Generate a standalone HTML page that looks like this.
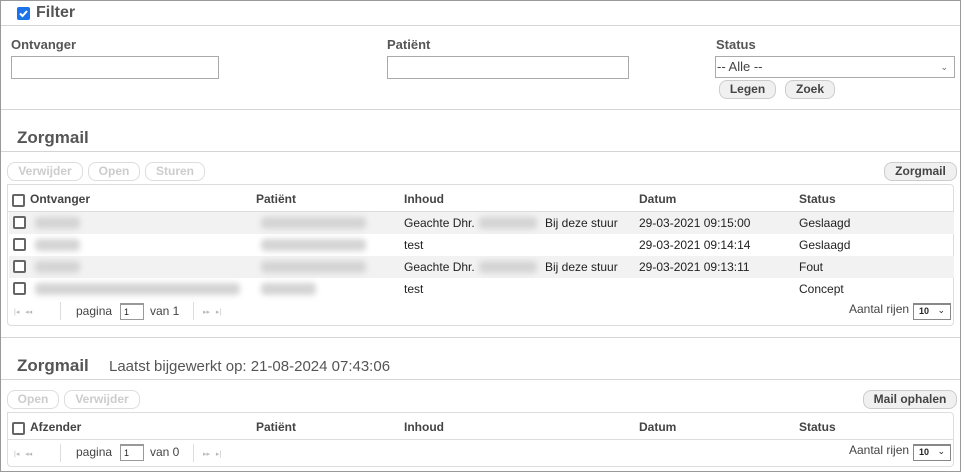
<!DOCTYPE html>
<html><head><meta charset="utf-8"><style>
*{box-sizing:border-box;margin:0;padding:0}
body{width:961px;height:472px;overflow:hidden;background:#fff;font-family:"Liberation Sans",Arial,sans-serif;font-size:12px;color:#222;position:relative}
.a{position:absolute}
.frame{left:0;top:0;width:961px;height:472px;border:1px solid #999}
.hl{position:absolute;left:1px;width:959px;height:1px;background:#d4d4d4}
.lbl{font-weight:bold;font-size:13px;color:#555}
.inp{border:1px solid #aaa;background:#fff;height:23px}
.btn{position:absolute;height:19px;border:1px solid #ccc;border-radius:8px;background:#f0f0f0;font-weight:bold;font-size:12px;color:#444;text-align:center;line-height:17px}
.dis{background:#fff;color:#ccc;border-color:#ddd}
.h2{font-weight:bold;font-size:17px;color:#555}
.box{position:absolute;left:7px;width:947px;border:1px solid #ddd;border-radius:0 4px 4px 4px}
.th{position:absolute;font-weight:bold;color:#444;font-size:12px}
.cb{position:absolute;width:13px;height:13px;border:2px solid #666;border-radius:2px;background:#fff}
.row{position:absolute;left:1px;width:945px;height:22px}
.t{position:absolute;font-size:12px;color:#222}
.bl{position:absolute;height:12px;background:#d4d4d4;filter:blur(3px);border-radius:4px}
.pg{position:absolute;font-size:12px;color:#444}
.pi{position:absolute;width:24px;height:17px;border:1px solid #999;border-top-width:2px;font-size:9px;padding-left:3px;line-height:14px}
.sep{position:absolute;width:1px;height:18px;background:#ddd}
.ic{position:absolute;font-size:7px;color:#bbb}
.sel{position:absolute;width:38px;height:17px;border:1px solid #888;border-top-width:2px;font-size:9px;font-weight:bold;padding-left:5px;line-height:13px;background:#fff}
</style></head><body>
<div class="a frame"></div>
<div class="a" style="left:17px;top:7px;width:13px;height:13px;background:#1a73e8;border-radius:2px"><svg width="13" height="13" viewBox="0 0 13 13"><path d="M3 6.5l2.5 2.5 4.5-5" stroke="#fff" stroke-width="2" fill="none"/></svg></div>
<div class="a" style="left:36px;top:4px;font-weight:bold;font-size:16px;color:#555">Filter</div>
<div class="hl" style="top:25px"></div>
<div class="a lbl" style="left:11px;top:37px">Ontvanger</div>
<div class="a inp" style="left:11px;top:56px;width:208px"></div>
<div class="a lbl" style="left:387px;top:37px">Patiënt</div>
<div class="a inp" style="left:387px;top:56px;width:242px"></div>
<div class="a lbl" style="left:716px;top:37px">Status</div>
<div class="a inp" style="left:715px;top:56px;width:240px;height:22px;font-size:13px;color:#444;padding-left:1px;line-height:20px">-- Alle --<span style="position:absolute;right:6px;top:0;font-size:9px;color:#666">&#8964;</span></div>
<div class="btn" style="left:719px;top:80px;width:57px">Legen</div>
<div class="btn" style="left:785px;top:80px;width:50px">Zoek</div>
<div class="hl" style="top:109px"></div>
<div class="a h2" style="left:17px;top:128px">Zorgmail</div>
<div class="hl" style="top:151px"></div>
<div class="btn dis" style="left:7px;top:162px;width:76px">Verwijder</div>
<div class="btn dis" style="left:88px;top:162px;width:52px">Open</div>
<div class="btn dis" style="left:145px;top:162px;width:60px">Sturen</div>
<div class="btn" style="left:884px;top:162px;width:73px">Zorgmail</div>

<div class="box" style="top:184px;height:142px">
 <div class="cb" style="left:4px;top:9px"></div>
 <div class="th" style="left:22px;top:7px">Ontvanger</div>
 <div class="th" style="left:248px;top:7px">Patiënt</div>
 <div class="th" style="left:396px;top:7px">Inhoud</div>
 <div class="th" style="left:631px;top:7px">Datum</div>
 <div class="th" style="left:791px;top:7px">Status</div>
 <div class="a" style="left:0;top:26px;width:945px;height:1px;background:#ddd"></div>
 <div class="row" style="top:27px;background:#f2f2f2"><div class="cb" style="left:4px;top:4px"></div><div class="bl" style="left:26px;top:5px;width:45px"></div><div class="bl" style="left:252px;top:5px;width:105px"></div><div class="t" style="left:395px;top:4px">Geachte Dhr.</div><div class="bl" style="left:470px;top:5px;width:58px"></div><div class="t" style="left:536px;top:4px">Bij deze stuur</div><div class="t" style="left:630px;top:4px">29-03-2021 09:15:00</div><div class="t" style="left:790px;top:4px">Geslaagd</div></div>
 <div class="row" style="top:49px"><div class="cb" style="left:4px;top:4px"></div><div class="bl" style="left:26px;top:5px;width:45px"></div><div class="bl" style="left:252px;top:5px;width:105px"></div><div class="t" style="left:395px;top:4px">test</div><div class="t" style="left:630px;top:4px">29-03-2021 09:14:14</div><div class="t" style="left:790px;top:4px">Geslaagd</div></div>
 <div class="row" style="top:71px;background:#f2f2f2"><div class="cb" style="left:4px;top:4px"></div><div class="bl" style="left:26px;top:5px;width:45px"></div><div class="bl" style="left:252px;top:5px;width:105px"></div><div class="t" style="left:395px;top:4px">Geachte Dhr.</div><div class="bl" style="left:470px;top:5px;width:58px"></div><div class="t" style="left:536px;top:4px">Bij deze stuur</div><div class="t" style="left:630px;top:4px">29-03-2021 09:13:11</div><div class="t" style="left:790px;top:4px">Fout</div></div>
 <div class="row" style="top:93px"><div class="cb" style="left:4px;top:4px"></div><div class="bl" style="left:26px;top:5px;width:205px"></div><div class="bl" style="left:252px;top:5px;width:55px"></div><div class="t" style="left:395px;top:4px">test</div><div class="t" style="left:790px;top:4px">Concept</div></div>
 <div class="ic" style="left:6px;top:123px">|◂ &nbsp;&nbsp;◂◂</div>
 <div class="sep" style="left:52px;top:117px"></div>
 <div class="pg" style="left:68px;top:119px">pagina</div>
 <div class="pi" style="left:112px;top:118px">1</div>
 <div class="pg" style="left:142px;top:119px">van 1</div>
 <div class="sep" style="left:185px;top:117px"></div>
 <div class="ic" style="left:195px;top:123px">▸▸ &nbsp;&nbsp;▸|</div>
 <div class="pg" style="left:841px;top:117px">Aantal rijen</div>
 <div class="sel" style="left:905px;top:118px">10<span style="position:absolute;right:5px;top:-1px;font-weight:normal">&#8964;</span></div>
</div>

<div class="hl" style="top:337px"></div>
<div class="a h2" style="left:17px;top:356px">Zorgmail</div>
<div class="a" style="left:109px;top:358px;font-size:15px;color:#555">Laatst bijgewerkt op: 21-08-2024 07:43:06</div>
<div class="hl" style="top:379px"></div>
<div class="btn dis" style="left:7px;top:390px;width:52px">Open</div>
<div class="btn dis" style="left:64px;top:390px;width:76px">Verwijder</div>
<div class="btn" style="left:863px;top:390px;width:94px">Mail ophalen</div>
<div class="box" style="top:412px;height:55px">
 <div class="cb" style="left:4px;top:9px"></div>
 <div class="th" style="left:22px;top:7px">Afzender</div>
 <div class="th" style="left:248px;top:7px">Patiënt</div>
 <div class="th" style="left:396px;top:7px">Inhoud</div>
 <div class="th" style="left:631px;top:7px">Datum</div>
 <div class="th" style="left:791px;top:7px">Status</div>
 <div class="a" style="left:0;top:26px;width:945px;height:1px;background:#ddd"></div>
 <div class="ic" style="left:6px;top:37px">|◂ &nbsp;&nbsp;◂◂</div>
 <div class="sep" style="left:52px;top:31px"></div>
 <div class="pg" style="left:68px;top:32px">pagina</div>
 <div class="pi" style="left:112px;top:31px">1</div>
 <div class="pg" style="left:142px;top:32px">van 0</div>
 <div class="sep" style="left:185px;top:31px"></div>
 <div class="ic" style="left:195px;top:37px">▸▸ &nbsp;&nbsp;▸|</div>
 <div class="pg" style="left:841px;top:30px">Aantal rijen</div>
 <div class="sel" style="left:905px;top:31px">10<span style="position:absolute;right:5px;top:-1px;font-weight:normal">&#8964;</span></div>
</div>
</body></html>
